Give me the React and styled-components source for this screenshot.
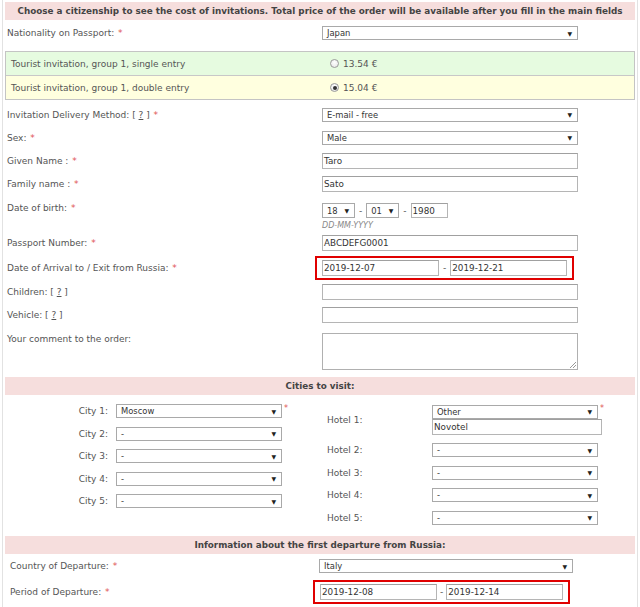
import React from "react";
import styled, { createGlobalStyle, css } from "styled-components";

const GlobalStyle = createGlobalStyle`
  html, body { margin: 0; padding: 0; background: #fff; }
  body { font-family: "DejaVu Sans", Verdana, sans-serif; font-size: 9px; color: #555; }
`;

const Page = styled.div`
  width: 636px;
  margin: 0 0 0 2px;
  border-left: 1px solid #e2e2e2;
  border-right: 1px solid #e2e2e2;
  padding: 2px 2px 0 2px;
  box-sizing: border-box;
  height: 607px;
  overflow: hidden;
`;

const SectionHeader = styled.div`
  background: #f6dedd;
  height: 18px;
  display: flex;
  align-items: center;
  justify-content: center;
  font-weight: bold;
  color: #444;
  font-size: 8.8px;
`;

const Row = styled.div`
  display: grid;
  grid-template-columns: 315px 1fr;
  height: ${(p) => p.$h}px;
  align-items: ${(p) => (p.$top ? "start" : "center")};
  padding-left: ${(p) => p.$pl ?? 2}px;
`;

const Label = styled.div`
  color: #555;
  padding-top: ${(p) => p.$pt || 0}px;
`;

const Star = styled.span`
  color: #e05555;
  margin-left: 1px;
`;

const Help = styled.span`
  text-decoration: underline;
`;

const Control = styled.div`
  display: flex;
  align-items: center;
  padding-top: ${(p) => p.$pt || 0}px;
  margin-left: ${(p) => p.$ml || 0}px;
`;

const SelectBox = styled.div`
  box-sizing: border-box;
  width: ${(p) => p.$w}px;
  height: ${(p) => p.$hh || 14}px;
  border: 1px solid #a9a9a9;
  background: #fff;
  display: flex;
  align-items: center;
  justify-content: space-between;
  padding: 0 5px 0 4px;
  color: #333;
  font-size: 8.4px;
  &::after {
    content: "▼";
    font-size: 6px;
    color: #222;
  }
`;

const TextInput = styled.div`
  box-sizing: border-box;
  width: ${(p) => p.$w}px;
  height: ${(p) => p.$hh || 16}px;
  border: 1px solid #b5b5b5;
  border-top-color: #a0a0a0;
  background: #fff;
  display: flex;
  align-items: center;
  padding-left: 1px;
  color: #333;
  font-size: 8.8px;
`;

const TextArea = styled.div`
  box-sizing: border-box;
  width: 256px;
  height: 37px;
  border: 1px solid #b0b0b0;
  background: #fff;
  position: relative;
  &::after {
    content: "";
    position: absolute;
    right: 1px;
    bottom: 1px;
    width: 6px;
    height: 6px;
    background: linear-gradient(135deg, transparent 45%, #999 45%, #999 55%, transparent 55%, transparent 70%, #999 70%, #999 80%, transparent 80%);
  }
`;

const Dash = styled.span`
  margin: 0 ${(p) => p.$m || 4}px;
  color: #555;
`;

const Highlight = styled.div`
  display: flex;
  align-items: center;
  border: 2px solid #e00000;
  padding: ${(p) => p.$pad};
`;

const Hint = styled.div`
  font-style: italic;
  color: #888;
  font-size: 8px;
  margin-top: 3px;
`;

const Stack = styled.div`
  display: flex;
  flex-direction: column;
`;

const PriceTable = styled.div`
  margin: 5px 0 3px 0;
  border: 1px solid #c4c4c4;
`;

const PriceRow = styled.div`
  display: grid;
  grid-template-columns: 316px 1fr;
  height: 23px;
  align-items: center;
  background: ${(p) => (p.$tone === "green" ? "#e6fbe0" : "#ffffdf")};
  border-top: ${(p) => (p.$first ? "none" : "1px solid #c8c8c8")};
  padding-left: 5px;
`;

const PriceCell = styled.div`
  display: flex;
  align-items: center;
  padding-left: 3px;
  color: #555;
  font-size: 9px;
`;

const Radio = styled.span`
  box-sizing: border-box;
  width: 9px;
  height: 9px;
  border-radius: 50%;
  border: 1px solid #9a9a9a;
  background: radial-gradient(circle at 50% 35%, #fff 0%, #e4e4e4 100%);
  margin-right: 4px;
  position: relative;
  ${(p) =>
    p.$checked &&
    css`
      &::after {
        content: "";
        position: absolute;
        left: 1.5px;
        top: 1.5px;
        width: 4px;
        height: 4px;
        border-radius: 50%;
        background: #333;
      }
    `}
`;

const Cities = styled.div`
  display: grid;
  grid-template-columns: 318px 1fr;
  padding-top: 5px;
  height: 141px;
  box-sizing: border-box;
`;

const CityCol = styled.div`
  display: flex;
  flex-direction: column;
`;

const CityRow = styled.div`
  display: grid;
  grid-template-columns: ${(p) => p.$cols};
  align-items: center;
  height: ${(p) => p.$h || 22.5}px;
`;

const CityLabel = styled.div`
  text-align: ${(p) => p.$align || "left"};
  padding-right: ${(p) => p.$pr || 0}px;
  padding-left: ${(p) => p.$pl || 0}px;
  font-size: 9px;
`;

const SmallStar = styled.span`
  color: #e05555;
  align-self: start;
  margin-top: 4px;
  margin-left: 2px;
  font-size: 8px;
  line-height: 10px;
`;

const Q = () => (
  <>
    [ <Help>?</Help> ]
  </>
);

export default function App() {
  return (
    <>
      <GlobalStyle />
      <Page>
        <SectionHeader>
          Choose a citizenship to see the cost of invitations. Total price of the order will be available after you fill in the main fields
        </SectionHeader>
        <Row $h={26}>
          <Label>
            Nationality on Passport: <Star>*</Star>
          </Label>
          <Control>
            <SelectBox $w={256}>Japan</SelectBox>
          </Control>
        </Row>
        <PriceTable>
          <PriceRow $tone="green" $first>
            <Label>Tourist invitation, group 1, single entry</Label>
            <PriceCell>
              <Radio />
              13.54 €
            </PriceCell>
          </PriceRow>
          <PriceRow $tone="yellow">
            <Label>Tourist invitation, group 1, double entry</Label>
            <PriceCell>
              <Radio $checked />
              15.04 €
            </PriceCell>
          </PriceRow>
        </PriceTable>
        <Row $h={23}>
          <Label>
            Invitation Delivery Method: <Q /> <Star>*</Star>
          </Label>
          <Control>
            <SelectBox $w={256}>E-mail - free</SelectBox>
          </Control>
        </Row>
        <Row $h={23}>
          <Label>
            Sex: <Star>*</Star>
          </Label>
          <Control>
            <SelectBox $w={256}>Male</SelectBox>
          </Control>
        </Row>
        <Row $h={23}>
          <Label>
            Given Name : <Star>*</Star>
          </Label>
          <Control>
            <TextInput $w={256}>Taro</TextInput>
          </Control>
        </Row>
        <Row $h={24}>
          <Label>
            Family name : <Star>*</Star>
          </Label>
          <Control>
            <TextInput $w={256}>Sato</TextInput>
          </Control>
        </Row>
        <Row $h={34} $top>
          <Label $pt={7}>
            Date of birth: <Star>*</Star>
          </Label>
          <Stack>
            <Control $pt={7}>
              <SelectBox $w={33} $hh={15}>18</SelectBox>
              <Dash>-</Dash>
              <SelectBox $w={33} $hh={15}>01</SelectBox>
              <Dash>-</Dash>
              <TextInput $w={37} $hh={15}>1980</TextInput>
            </Control>
            <Hint>DD-MM-YYYY</Hint>
          </Stack>
        </Row>
        <Row $h={26}>
          <Label>
            Passport Number: <Star>*</Star>
          </Label>
          <Control>
            <TextInput $w={256}>ABCDEFG0001</TextInput>
          </Control>
        </Row>
        <Row $h={24}>
          <Label>
            Date of Arrival to / Exit from Russia: <Star>*</Star>
          </Label>
          <Control $ml={-7}>
            <Highlight $pad="2px 5px">
              <TextInput $w={117}>2019-12-07</TextInput>
              <Dash $m={4}>-</Dash>
              <TextInput $w={117}>2019-12-21</TextInput>
            </Highlight>
          </Control>
        </Row>
        <Row $h={23}>
          <Label>
            Children: <Q />
          </Label>
          <Control>
            <TextInput $w={256} />
          </Control>
        </Row>
        <Row $h={24}>
          <Label>
            Vehicle: <Q />
          </Label>
          <Control>
            <TextInput $w={256} />
          </Control>
        </Row>
        <Row $h={50} $top>
          <Label $pt={7}>Your comment to the order:</Label>
          <Control $pt={6}>
            <TextArea />
          </Control>
        </Row>
        <SectionHeader>Cities to visit:</SectionHeader>
        <Cities>
          <CityCol>
            {["Moscow", "-", "-", "-", "-"].map((v, i) => (
              <CityRow key={i} $cols="111px 166px 12px">
                <CityLabel $align="right" $pr={8}>
                  City {i + 1}:
                </CityLabel>
                <SelectBox $w={166}>{v}</SelectBox>
                {i === 0 ? <SmallStar>*</SmallStar> : <span />}
              </CityRow>
            ))}
          </CityCol>
          <CityCol>
            <CityRow $cols="109px 166px 12px" $h={39}>
              <CityLabel $pl={4}>Hotel 1:</CityLabel>
              <Stack>
                <SelectBox $w={166}>Other</SelectBox>
                <TextInput $w={170}>Novotel</TextInput>
              </Stack>
              <SmallStar>*</SmallStar>
            </CityRow>
            {[2, 3, 4, 5].map((n) => (
              <CityRow key={n} $cols="109px 166px 12px">
                <CityLabel $pl={4}>Hotel {n}:</CityLabel>
                <SelectBox $w={166}>-</SelectBox>
                <span />
              </CityRow>
            ))}
          </CityCol>
        </Cities>
        <SectionHeader>Information about the first departure from Russia:</SectionHeader>
        <Row $h={24} $pl={5}>
          <Label>
            Country of Departure: <Star>*</Star>
          </Label>
          <Control $ml={-6}>
            <SelectBox $w={254}>Italy</SelectBox>
          </Control>
        </Row>
        <Row $h={28} $pl={5}>
          <Label>
            Period of Departure: <Star>*</Star>
          </Label>
          <Control $ml={-12}>
            <Highlight $pad="2px 5px">
              <TextInput $w={117}>2019-12-08</TextInput>
              <Dash $m={3}>-</Dash>
              <TextInput $w={117}>2019-12-14</TextInput>
            </Highlight>
          </Control>
        </Row>
      </Page>
    </>
  );
}
